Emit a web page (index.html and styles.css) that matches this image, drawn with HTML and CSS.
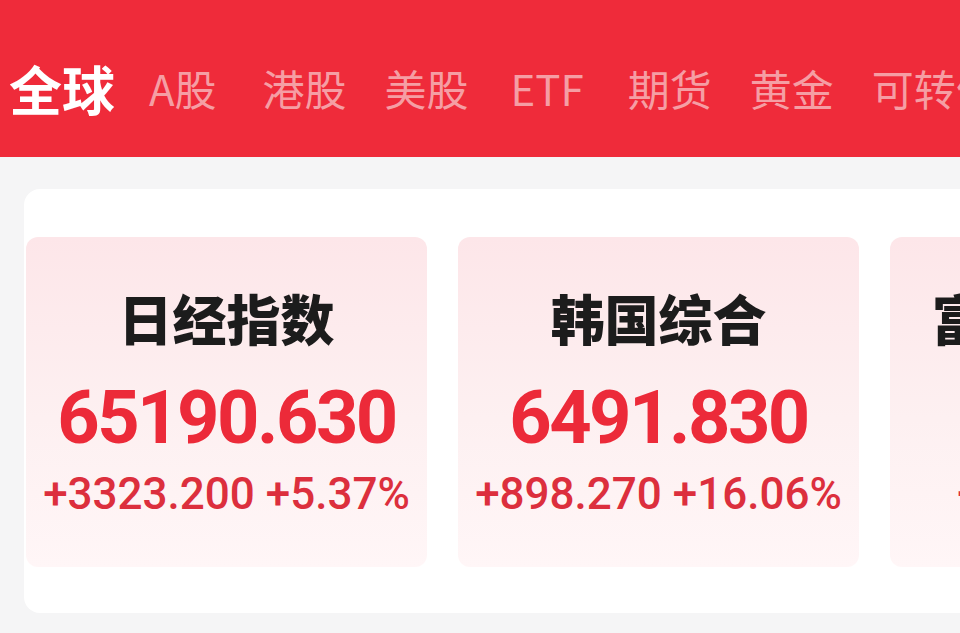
FILE: index.html
```html
<!DOCTYPE html>
<html lang="zh-CN">
<head>
<meta charset="utf-8">
<title>全球指数</title>
<link rel="stylesheet" href="styles.css">
</head>
<body>
<div class="page">
  <header class="topbar">
    <nav class="tabs">
      <span class="tab active">全球</span>
      <span class="tab latin-a">A股</span>
      <span class="tab">港股</span>
      <span class="tab">美股</span>
      <span class="tab etf">ETF</span>
      <span class="tab">期货</span>
      <span class="tab">黄金</span>
      <span class="tab">可转债</span>
    </nav>
  </header>
  <main class="content">
    <section class="panel">
      <div class="cards">
        <div class="card">
          <div class="name">日经指数</div>
          <div class="price">65190.630</div>
          <div class="change">+3323.200 +5.37%</div>
        </div>
        <div class="card">
          <div class="name">韩国综合</div>
          <div class="price">6491.830</div>
          <div class="change">+898.270 +16.06%</div>
        </div>
        <div class="card">
          <div class="name">富时中国A50</div>
          <div class="price">3562.18</div>
          <div class="change">+9.73 +0.32%</div>
        </div>
      </div>
    </section>
  </main>
</div>
</body>
</html>
```
FILE: styles.css
```css
html, body {
  margin: 0;
  padding: 0;
}
body {
  width: 960px;
  height: 633px;
  overflow: hidden;
  background: #f5f5f6;
  font-family: "Noto Sans CJK SC", "Noto Sans", sans-serif;
}
.page {
  width: 960px;
  height: 633px;
  overflow: hidden;
}
.topbar {
  height: 157px;
  background: #ef2b3a;
  display: flex;
  align-items: center;
}
.tabs {
  display: flex;
  align-items: center;
  gap: 38px;
  padding-left: 9px;
  padding-top: 18px;
  white-space: nowrap;
}
.tab {
  font-size: 42px;
  line-height: 60px;
  color: #f59ea4;
  font-weight: 400;
}
.tab.active {
  font-size: 53px;
  color: #ffffff;
  font-weight: 700;
  margin-right: -4px;
}
.tab.latin-a {
  margin-right: 8px;
}
.tab.etf {
  margin-left: 4px;
  margin-right: 6px;
}
.content {
  padding: 32px 0 0 24px;
}
.panel {
  width: 1400px;
  height: 424px;
  box-sizing: border-box;
  background: #ffffff;
  border-radius: 16px;
  padding: 48px 0 0 2px;
}
.cards {
  display: flex;
  gap: 31px;
}
.card {
  width: 401px;
  height: 330px;
  flex: none;
  border-radius: 12px;
  background: linear-gradient(180deg, #fde6e9 0%, #fdf0f1 55%, #fff6f7 100%);
  display: flex;
  flex-direction: column;
  align-items: center;
}
.name {
  margin-top: 51px;
  font-size: 54px;
  line-height: 60px;
  font-weight: 900;
  color: #1c1c1c;
  white-space: nowrap;
}
.price {
  margin-top: 30px;
  font-family: Roboto, "Liberation Sans", sans-serif;
  font-size: 74px;
  line-height: 80px;
  font-weight: 700;
  letter-spacing: -2.5px;
  color: #ec2a39;
  white-space: nowrap;
}
.change {
  margin-top: 11px;
  font-family: Roboto, "Liberation Sans", sans-serif;
  font-size: 44px;
  line-height: 50px;
  font-weight: 500;
  color: #dc2f3d;
  white-space: nowrap;
}
```
